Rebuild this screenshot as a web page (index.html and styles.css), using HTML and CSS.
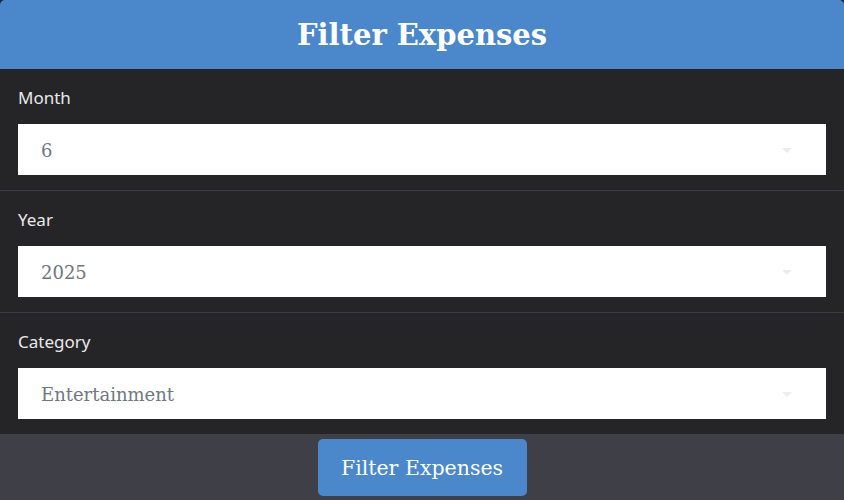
FILE: index.html
```html
<!DOCTYPE html>
<html>
<head>
<meta charset="utf-8">
<link rel="stylesheet" href="styles.css">
</head>
<body>
<div class="card">
  <header class="header"><h1 class="title">Filter Expenses</h1></header>
  <div class="field">
    <label class="label">Month</label>
    <div class="select"><span class="value">6</span><span class="arrow"></span></div>
  </div>
  <div class="field">
    <label class="label">Year</label>
    <div class="select"><span class="value">2025</span><span class="arrow"></span></div>
  </div>
  <div class="field last">
    <label class="label">Category</label>
    <div class="select"><span class="value">Entertainment</span><span class="arrow"></span></div>
  </div>
  <footer class="footer"><button class="btn">Filter Expenses</button></footer>
</div>
</body>
</html>
```
FILE: styles.css
```css
html, body { margin: 0; padding: 0; background: #252527; }
.card { width: 844px; height: 500px; display: flex; flex-direction: column; background: #252527; overflow: hidden; }
.header { height: 69px; background: #4b87cb; border-radius: 5px 5px 0 0; display: flex; align-items: center; justify-content: center; }
.title { margin: 0; color: #fff; font-family: "DejaVu Serif", serif; font-weight: bold; font-size: 29px; }
.field { padding: 17px 18px 15px; border-bottom: 1px solid #3c3c42; display: flex; flex-direction: column; }
.field.last { border-bottom: none; }
.label { color: #e8e8ea; font-family: "Noto Sans", sans-serif; font-size: 17px; line-height: 24px; margin-bottom: 14px; }
.select { height: 51px; background: #fff; display: flex; align-items: center; justify-content: space-between; padding: 2px 34px 0 23px; box-sizing: border-box; }
.value { color: #707680; font-family: "DejaVu Serif", serif; font-size: 18px; }
.arrow { width: 0; height: 0; border-left: 5px solid transparent; border-right: 5px solid transparent; border-top: 5px solid #ececec; }
.footer { flex: 1; background: #3f4047; display: flex; justify-content: center; align-items: flex-start; padding-top: 5px; }
.btn { width: 209px; height: 57px; border: none; border-radius: 5px; background: #4b87cb; color: #fff; font-family: "DejaVu Serif", serif; font-size: 20.5px; }
```
